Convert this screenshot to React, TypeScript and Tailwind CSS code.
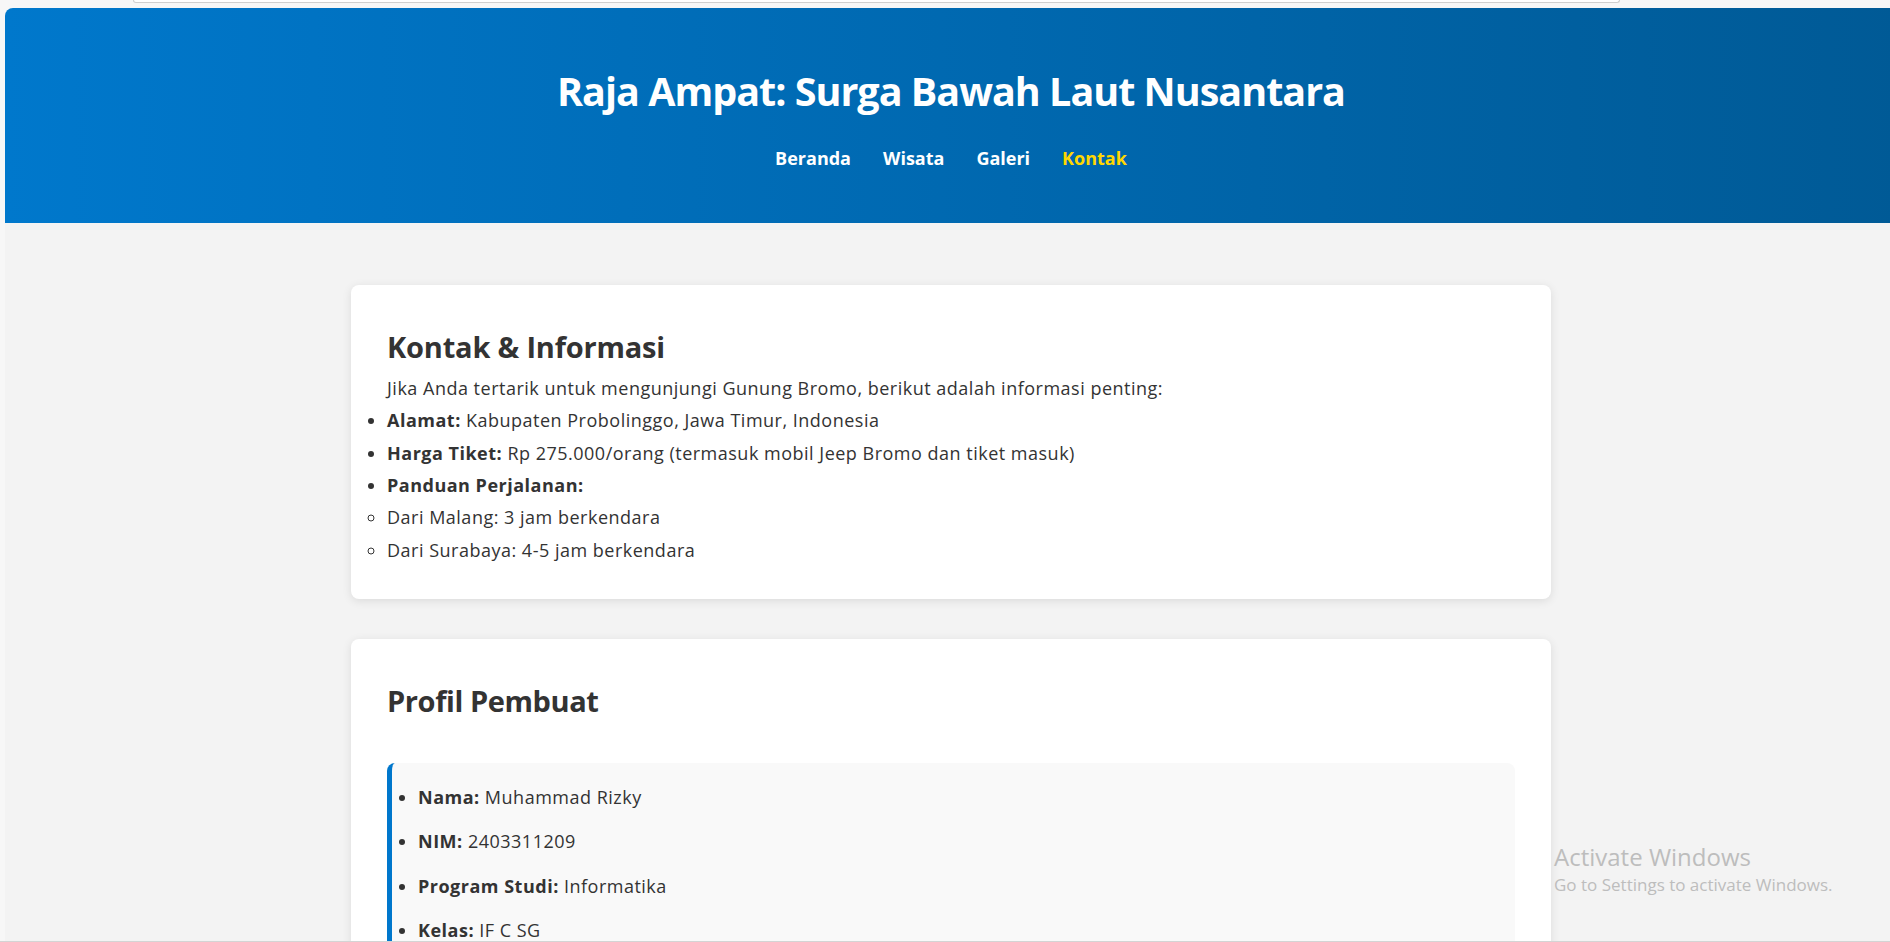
import React from 'react'

const font = { fontFamily: '"Open Sans", "Noto Sans", sans-serif' }

export default function App() {
  const navItems = ['Beranda', 'Wisata', 'Galeri', 'Kontak']

  return (
    <div className="relative h-[942px] w-[1890px] overflow-hidden bg-[#f7f7f7] text-[#333]" style={font}>
      {/* browser chrome strip */}
      <div className="h-[8px] pl-[133px]">
        <div className="h-[3px] w-[1487px] rounded-b-[6px] border-x border-b border-[#cfcfcf] bg-white" />
      </div>

      <div className="ml-[5px] w-[1892px] overflow-hidden rounded-tl-[8px] bg-[#f3f3f3]">
        {/* Header */}
        <header className="flex h-[215px] flex-col items-center bg-gradient-to-r from-[#0078cc] to-[#005a96] pt-[60px] text-white">
          <h1 className="text-[39.5px] font-bold leading-[1.2] tracking-[-1px]">Raja Ampat: Surga Bawah Laut Nusantara</h1>
          <nav className="mt-[27px] flex gap-[32px] text-[18px] font-bold leading-[1.8]">
            {navItems.map((item) => (
              <a key={item} className={item === 'Kontak' ? 'text-[#ffd700]' : 'text-white'}>
                {item}
              </a>
            ))}
          </nav>
        </header>

        <main className="flex flex-col items-center pt-[62px]">
          {/* Kontak */}
          <section className="w-[1200px] rounded-[8px] bg-white px-[36px] pb-[33px] pt-[45px] shadow-[0_2px_10px_rgba(0,0,0,0.1)]">
            <h2 className="mb-[7px] text-[29px] font-bold leading-[1.2] tracking-[-0.2px]">Kontak &amp; Informasi</h2>
            <div className="text-[18px] leading-[1.8] tracking-[0.5px]">
              <p>Jika Anda tertarik untuk mengunjungi Gunung Bromo, berikut adalah informasi penting:</p>
              <ul className="list-outside list-disc">
                <li>
                  <strong>Alamat:</strong> Kabupaten Probolinggo, Jawa Timur, Indonesia
                </li>
                <li>
                  <strong>Harga Tiket:</strong> Rp 275.000/orang (termasuk mobil Jeep Bromo dan tiket masuk)
                </li>
                <li>
                  <strong>Panduan Perjalanan:</strong>
                </li>
                <ul className="list-outside list-[circle]">
                  <li>Dari Malang: 3 jam berkendara</li>
                  <li>Dari Surabaya: 4-5 jam berkendara</li>
                </ul>
              </ul>
            </div>
          </section>

          {/* Profil */}
          <section className="mt-[40px] w-[1200px] rounded-[8px] bg-white px-[36px] pb-[33px] pt-[45px] shadow-[0_2px_10px_rgba(0,0,0,0.1)]">
            <h2 className="text-[29px] font-bold leading-[1.2] tracking-[-0.4px]">Profil Pembuat</h2>
            <div className="mt-[44px] rounded-[8px] border-l-[5px] border-[#0077cc] bg-[#f9f9f9] pb-[20px] pl-[26px] pt-[18px] text-[18px] leading-[1.8] tracking-[0.5px]">
              <ul className="list-outside list-disc">
                <li className="mb-[12px]">
                  <strong>Nama:</strong> Muhammad Rizky
                </li>
                <li className="mb-[12px]">
                  <strong>NIM:</strong> 2403311209
                </li>
                <li className="mb-[12px]">
                  <strong>Program Studi:</strong> Informatika
                </li>
                <li className="mb-[12px]">
                  <strong>Kelas:</strong> IF C SG
                </li>
                <li className="mb-[12px]">
                  <strong>Universitas:</strong> Universitas Negeri
                </li>
              </ul>
            </div>
          </section>
        </main>
      </div>

      {/* Windows watermark */}
      <div className="pointer-events-none absolute left-[1554px] top-[842px] text-[#bdbdbd]">
        <div className="text-[24px] leading-[30px]">Activate Windows</div>
        <div className="text-[17px] leading-[26px]">Go to Settings to activate Windows.</div>
      </div>
      <div className="absolute bottom-0 left-0 h-[1px] w-full bg-[#d4d4d4]" />
    </div>
  )
}
